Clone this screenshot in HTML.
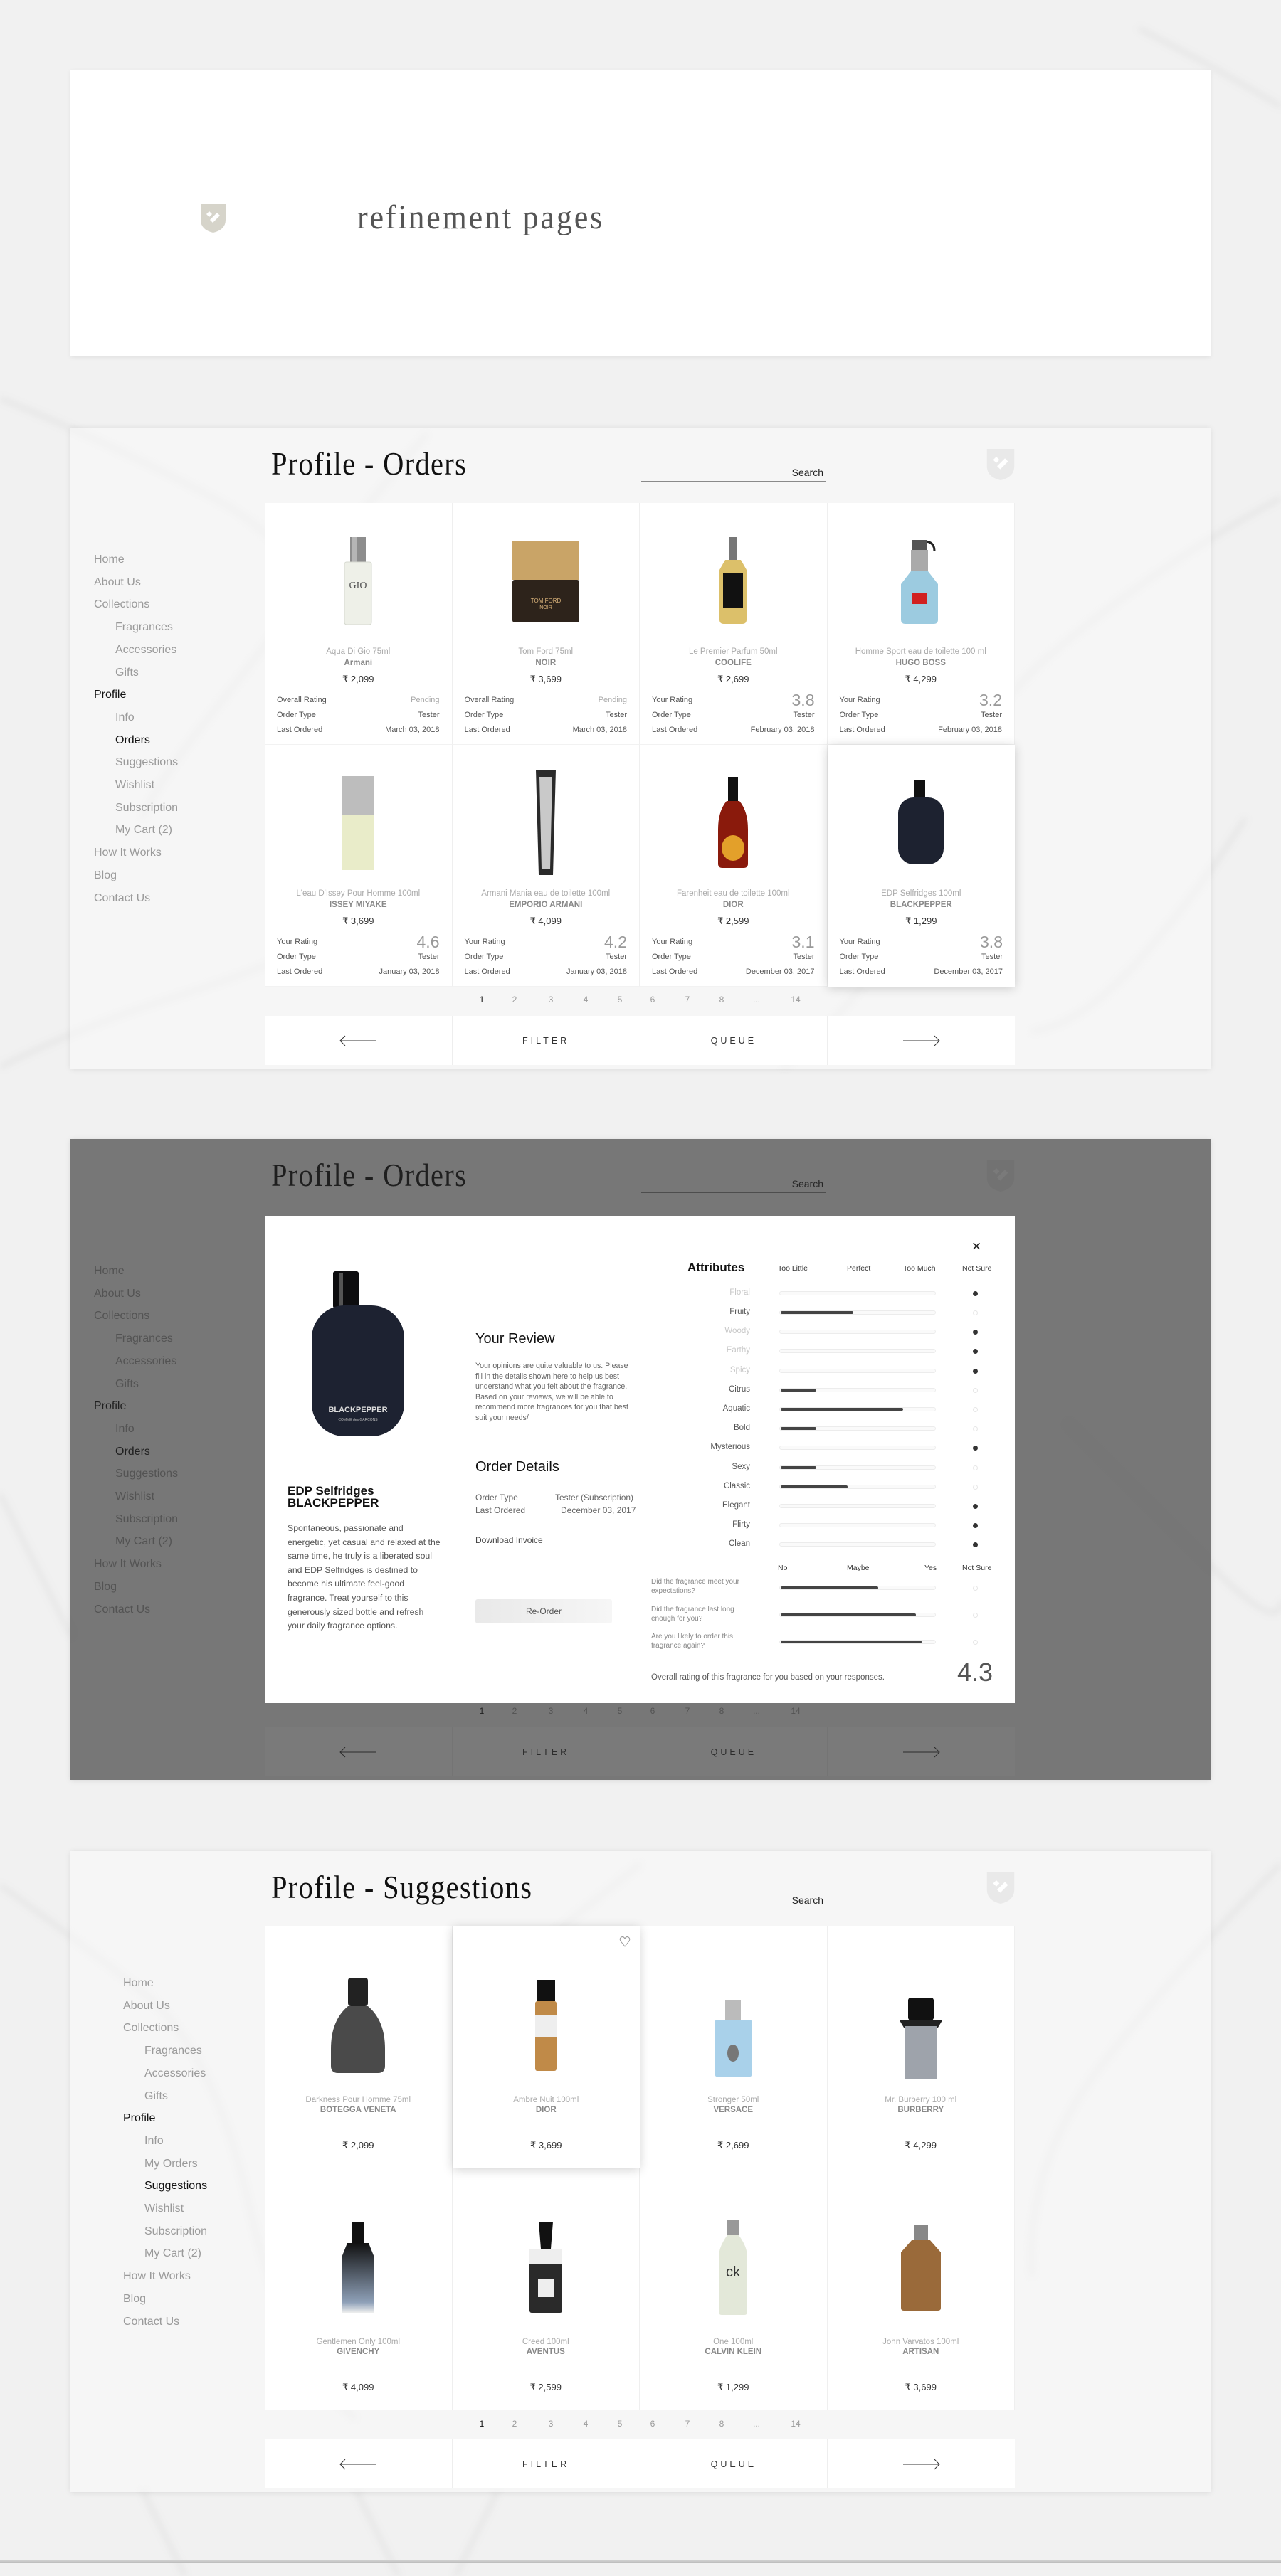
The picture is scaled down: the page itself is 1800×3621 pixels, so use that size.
<!DOCTYPE html>
<html><head><meta charset="utf-8">
<style>
*{margin:0;padding:0;box-sizing:border-box}
html,body{width:1800px;height:3621px;overflow:hidden}
body{position:relative;background:#f1f1f1;font-family:"Liberation Sans",Arial,sans-serif;color:#333}
.bg{position:absolute;left:0;top:0}
.panel{position:absolute;left:99px;width:1602px;overflow:hidden}
.p1{top:99px;height:402px;background:#fff;box-shadow:0 1px 6px rgba(0,0,0,.08)}
.pm{height:901px;background:rgba(250,250,250,.55);box-shadow:0 1px 8px rgba(0,0,0,.1)}
.p2{top:601px}.p3{top:1601px}.p4{top:2602px}
.ttl{position:absolute;left:282px;top:28px;font:46px/1 "Liberation Serif",serif;letter-spacing:1.5px;transform:scaleX(.88);transform-origin:left top;color:#111;white-space:nowrap}
.srch{position:absolute;left:802px;top:55px;width:259px;height:21px;border-bottom:1px solid #8a8a8a;text-align:right;font-size:14px;color:#222;padding-right:3px}
.shd{position:absolute;left:1287px;top:30px}
.side{position:absolute;left:33px;top:170px;list-style:none;font-size:16px;line-height:31.7px;color:#9a9a9a}
.side li.s{padding-left:30px}
.side li.d{color:#111}
.grid{position:absolute;left:273px;top:106px;width:1054px}
.c{position:relative;float:left;width:263.5px;height:340px;background:#fff;border-right:1px solid #efefef;border-bottom:1px solid #f2f2f2}
.c.hi{box-shadow:0 2px 14px rgba(0,0,0,.18);z-index:2;border:none}
.im{position:absolute;left:0;right:0;top:40px;height:140px;display:flex;justify-content:center;align-items:center}
.nm{position:absolute;top:203px;width:100%;text-align:center;font-size:11.5px;color:#aaa;white-space:nowrap}
.br{position:absolute;top:219px;width:100%;text-align:center;font-size:11.5px;color:#888;font-weight:bold}
.pr{position:absolute;top:240px;width:100%;text-align:center;font-size:13px;color:#333}
.rw{position:absolute;left:17px;right:17px;display:flex;justify-content:space-between;align-items:flex-end;font-size:11px;color:#555;height:14px;line-height:14px}
.r1{top:270px}.r2{top:291px}.r3{top:312px}
.pend{color:#aaa}
.big{font-size:23px;line-height:14px;color:#999}
.sg .im{top:62px;height:155px}
.sg .nm{top:238px}.sg .br{top:252px}.sg .pr{top:300px}
.pg{position:absolute;top:797px;left:0;width:1602px;height:20px;font-size:12px;color:#999}
.pg span{position:absolute;transform:translateX(-50%)}
.pg span.a{color:#111}
.bar{position:absolute;left:273px;top:827px;width:1054px;height:69px;background:#fff;display:flex}
.bar div{flex:1;border-right:1px solid #eee;display:flex;align-items:center;justify-content:center;font-size:12.5px;letter-spacing:4px;color:#333}
.bar div:last-child{border:none}
.ov{position:absolute;left:0;top:0;width:1602px;height:901px;background:rgba(40,40,40,.62)}
.modal{position:absolute;left:273px;top:108px;width:1054px;height:685px;background:#fff;font-family:"Liberation Sans",Arial,sans-serif}
.modal .a{position:absolute;white-space:nowrap}
.lab{position:absolute;right:372px;width:150px;text-align:right;font-size:11.5px;color:#555}
.lab.off{color:#c8c8c8}
.trk{position:absolute;left:723px;width:220px;height:6px;border:1px solid #ececec;border-radius:3px;background:#fafafa}
.trk i{position:absolute;left:1px;top:0;height:4px;background:#444;border-radius:2px}
.dot{position:absolute;left:995px;width:7px;height:7px;border-radius:50%;background:#333}
.dot.o{background:#fff;border:1px solid #e6e6e6}
</style></head><body>
<svg class="bg" width="1800" height="3621" viewBox="0 0 1800 3621">
<defs><filter id="bl"><feGaussianBlur stdDeviation="5"/></filter></defs>
<g fill="none" stroke="#bdbdbd" stroke-width="5" opacity=".3" filter="url(#bl)">
<path d="M0 560 Q150 620 300 700 T520 980 T700 1200"/>
<path d="M1800 700 Q1650 780 1500 900 T1300 1200 T1100 1500"/>
<path d="M600 610 Q520 700 450 800 T300 1000 T200 1150"/>
<path d="M0 1500 Q120 1440 250 1400 T500 1300"/>
<path d="M1750 1150 Q1680 1260 1600 1350 T1450 1450"/>
<path d="M0 2650 Q100 2720 200 2800 T350 3100 T500 3400"/>
<path d="M1800 2620 Q1660 2760 1550 2900 T1450 3200"/>
<path d="M900 2620 Q850 2660 800 2700 T650 2850"/>
<path d="M200 3500 L260 3621"/><path d="M500 3500 L560 3621"/><path d="M700 3500 L640 3621"/>
<path d="M1600 40 Q1700 90 1800 150"/>
<path d="M1500 2000 Q1600 2100 1700 2200 T1800 2250"/><path d="M0 2100 Q50 2200 100 2300"/>
</g>
</svg>

<!-- Panel 1 -->
<div class="panel p1">
<svg style="position:absolute;left:183px;top:188px" width="35" height="40" viewBox="0 0 35 40"><path d="M0 0H35V22Q35 36 17.5 40Q0 36 0 22Z" fill="#d6d4ca"/><path d="M8 14l4-4 4 4-4 4zM13 22l10-10 4 4-10 10z" fill="#fff"/></svg>
<div style="position:absolute;left:403px;top:178px;font:48px/1.2 'Liberation Serif',serif;letter-spacing:3px;color:#555;transform:scaleX(.92);transform-origin:left">refinement pages</div>
</div>

<!-- Panel 2 -->
<div class="panel pm p2">
<div class="ttl">Profile - Orders</div>
<div class="srch">Search</div>
<svg class="shd" width="40" height="44" viewBox="0 0 35 40"><path d="M0 0H35V22Q35 36 17.5 40Q0 36 0 22Z" fill="#e9e9e9"/><path d="M8 14l4-4 4 4-4 4zM13 22l10-10 4 4-10 10z" fill="#fff"/></svg>
<ul class="side"><li>Home</li><li>About Us</li><li>Collections</li><li class="s">Fragrances</li><li class="s">Accessories</li><li class="s">Gifts</li><li class="d">Profile</li><li class="s">Info</li><li class="s d">Orders</li><li class="s">Suggestions</li><li class="s">Wishlist</li><li class="s">Subscription</li><li class="s">My Cart (2)</li><li>How It Works</li><li>Blog</li><li>Contact Us</li></ul>
<div class="grid">
<div class="c"><div class="im"><svg width="70" height="125" viewBox="0 0 70 125"><rect x="24" y="0" width="22" height="35" fill="#8d8d8d"/><rect x="27" y="0" width="6" height="35" fill="#b5b5b5"/><rect x="16" y="35" width="38" height="88" rx="3" fill="#eef0e8" stroke="#d5d8cf"/><text x="35" y="72" font-size="14" text-anchor="middle" fill="#555" font-family="Liberation Serif">GIO</text></svg></div><div class="nm">Aqua Di Gio 75ml</div><div class="br">Armani</div><div class="pr">₹ 2,099</div><div class="rw r1"><span>Overall Rating</span><span class="pend">Pending</span></div><div class="rw r2"><span>Order Type</span><span>Tester</span></div><div class="rw r3"><span>Last Ordered</span><span>March 03, 2018</span></div></div>
<div class="c"><div class="im"><svg width="100" height="125" viewBox="0 0 100 125"><rect x="3" y="5" width="94" height="55" fill="#c9a467"/><rect x="3" y="60" width="94" height="60" rx="3" fill="#2d231b"/><text x="50" y="92" font-size="8" text-anchor="middle" fill="#d9b27a">TOM FORD</text><text x="50" y="101" font-size="7" text-anchor="middle" fill="#d9b27a">NOIR</text></svg></div><div class="nm">Tom Ford 75ml</div><div class="br">NOIR</div><div class="pr">₹ 3,699</div><div class="rw r1"><span>Overall Rating</span><span class="pend">Pending</span></div><div class="rw r2"><span>Order Type</span><span>Tester</span></div><div class="rw r3"><span>Last Ordered</span><span>March 03, 2018</span></div></div>
<div class="c"><div class="im"><svg width="50" height="125" viewBox="0 0 50 125"><rect x="19" y="0" width="11" height="32" fill="#777"/><path d="M14 32h22l8 14v70q0 6-6 6H12q-6 0-6-6V46z" fill="#dcc06a"/><rect x="11" y="50" width="28" height="50" fill="#111"/></svg></div><div class="nm">Le Premier Parfum 50ml</div><div class="br">COOLIFE</div><div class="pr">₹ 2,699</div><div class="rw r1"><span>Your Rating</span><span class="big">3.8</span></div><div class="rw r2"><span>Order Type</span><span>Tester</span></div><div class="rw r3"><span>Last Ordered</span><span>February 03, 2018</span></div></div>
<div class="c"><div class="im"><svg width="70" height="125" viewBox="0 0 70 125"><path d="M40 6q14 0 14 14" stroke="#222" stroke-width="3" fill="none"/><rect x="23" y="4" width="20" height="14" fill="#555"/><rect x="21" y="18" width="24" height="30" fill="#aaa"/><path d="M21 48h24l14 18v50q0 6-6 6H13q-6 0-6-6V66z" fill="#9ccbe0"/><rect x="22" y="78" width="22" height="16" fill="#d12020"/></svg></div><div class="nm">Homme Sport eau de toilette 100 ml</div><div class="br">HUGO BOSS</div><div class="pr">₹ 4,299</div><div class="rw r1"><span>Your Rating</span><span class="big">3.2</span></div><div class="rw r2"><span>Order Type</span><span>Tester</span></div><div class="rw r3"><span>Last Ordered</span><span>February 03, 2018</span></div></div>
<div class="c"><div class="im"><svg width="50" height="140" viewBox="0 0 50 140"><rect x="3" y="4" width="44" height="54" fill="#bdbdbd"/><rect x="3" y="58" width="44" height="78" fill="#e9ecc9"/></svg></div><div class="nm">L'eau D'Issey Pour Homme 100ml</div><div class="br">ISSEY MIYAKE</div><div class="pr">₹ 3,699</div><div class="rw r1"><span>Your Rating</span><span class="big">4.6</span></div><div class="rw r2"><span>Order Type</span><span>Tester</span></div><div class="rw r3"><span>Last Ordered</span><span>January 03, 2018</span></div></div>
<div class="c"><div class="im"><svg width="40" height="150" viewBox="0 0 40 150"><path d="M6 0h28l-4 148H10z" fill="#2a2a2a"/><path d="M11 10h18l-3 130H14z" fill="#c9c9c9"/></svg></div><div class="nm">Armani Mania eau de toilette 100ml</div><div class="br">EMPORIO ARMANI</div><div class="pr">₹ 4,099</div><div class="rw r1"><span>Your Rating</span><span class="big">4.2</span></div><div class="rw r2"><span>Order Type</span><span>Tester</span></div><div class="rw r3"><span>Last Ordered</span><span>January 03, 2018</span></div></div>
<div class="c"><div class="im"><svg width="50" height="130" viewBox="0 0 50 130"><rect x="18" y="0" width="14" height="34" fill="#111"/><path d="M16 34h18q12 14 12 40v48q0 6-6 6H10q-6 0-6-6V74q0-26 12-40z" fill="#8a1a0c"/><ellipse cx="25" cy="100" rx="16" ry="18" fill="#e3a02a"/></svg></div><div class="nm">Farenheit eau de toilette 100ml</div><div class="br">DIOR</div><div class="pr">₹ 2,599</div><div class="rw r1"><span>Your Rating</span><span class="big">3.1</span></div><div class="rw r2"><span>Order Type</span><span>Tester</span></div><div class="rw r3"><span>Last Ordered</span><span>December 03, 2017</span></div></div>
<div class="c hi"><div class="im"><svg width="70" height="120" viewBox="0 0 70 120"><rect x="25" y="0" width="16" height="26" fill="#111"/><rect x="3" y="24" width="64" height="94" rx="22" fill="#1d2230"/></svg></div><div class="nm">EDP Selfridges 100ml</div><div class="br">BLACKPEPPER</div><div class="pr">₹ 1,299</div><div class="rw r1"><span>Your Rating</span><span class="big">3.8</span></div><div class="rw r2"><span>Order Type</span><span>Tester</span></div><div class="rw r3"><span>Last Ordered</span><span>December 03, 2017</span></div></div>
</div>
<div class="pg"><span class="a" style="left:578px">1</span><span style="left:624px">2</span><span style="left:675px">3</span><span style="left:724px">4</span><span style="left:772px">5</span><span style="left:818px">6</span><span style="left:867px">7</span><span style="left:915px">8</span><span style="left:964px">...</span><span style="left:1019px">14</span></div>
<div class="bar"><div><svg width="52" height="16" viewBox="0 0 52 16"><path d="M1 8H52M8 1L1 8l7 7" stroke="#333" fill="none"/></svg></div><div>FILTER</div><div>QUEUE</div><div><svg width="52" height="16" viewBox="0 0 52 16"><path d="M0 8H51M44 1l7 7-7 7" stroke="#333" fill="none"/></svg></div></div>
</div>

<!-- Panel 3 -->
<div class="panel pm p3">
<div class="ttl">Profile - Orders</div>
<div class="srch">Search</div>
<svg class="shd" width="40" height="44" viewBox="0 0 35 40"><path d="M0 0H35V22Q35 36 17.5 40Q0 36 0 22Z" fill="#e9e9e9"/><path d="M8 14l4-4 4 4-4 4zM13 22l10-10 4 4-10 10z" fill="#fff"/></svg>
<ul class="side"><li>Home</li><li>About Us</li><li>Collections</li><li class="s">Fragrances</li><li class="s">Accessories</li><li class="s">Gifts</li><li class="d">Profile</li><li class="s">Info</li><li class="s d">Orders</li><li class="s">Suggestions</li><li class="s">Wishlist</li><li class="s">Subscription</li><li class="s">My Cart (2)</li><li>How It Works</li><li>Blog</li><li>Contact Us</li></ul>
<div class="pg"><span class="a" style="left:578px">1</span><span style="left:624px">2</span><span style="left:675px">3</span><span style="left:724px">4</span><span style="left:772px">5</span><span style="left:818px">6</span><span style="left:867px">7</span><span style="left:915px">8</span><span style="left:964px">...</span><span style="left:1019px">14</span></div>
<div class="bar"><div><svg width="52" height="16" viewBox="0 0 52 16"><path d="M1 8H52M8 1L1 8l7 7" stroke="#333" fill="none"/></svg></div><div>FILTER</div><div>QUEUE</div><div><svg width="52" height="16" viewBox="0 0 52 16"><path d="M0 8H51M44 1l7 7-7 7" stroke="#333" fill="none"/></svg></div></div>
<div class="ov"></div>
<div class="modal">
<svg style="position:absolute;left:64px;top:76px" width="134" height="236" viewBox="0 0 134 236"><rect x="32" y="2" width="36" height="52" rx="3" fill="#0d0d0f"/><rect x="40" y="4" width="6" height="48" fill="#555"/><rect x="2" y="50" width="130" height="184" rx="46" fill="#1d2231"/><text x="67" y="200" font-size="11" font-weight="bold" text-anchor="middle" fill="#ddd" font-family="Liberation Sans">BLACKPEPPER</text><text x="67" y="212" font-size="5" text-anchor="middle" fill="#bbb" font-family="Liberation Sans">COMME des GARÇONS</text></svg>
<div class="a" style="left:32px;top:378px;font-size:17px;line-height:17px;font-weight:bold;color:#111">EDP Selfridges<br>BLACKPEPPER</div>
<div class="a" style="left:32px;top:430px;width:215px;white-space:normal;font-size:12.3px;line-height:19.6px;color:#555">Spontaneous, passionate and energetic, yet casual and relaxed at the same time, he truly is a liberated soul and EDP Selfridges is destined to become his ultimate feel-good fragrance. Treat yourself to this generously sized bottle and refresh your daily fragrance options.</div>
<div class="a" style="left:296px;top:162px;font-size:20px;color:#111">Your Review</div>
<div class="a" style="left:296px;top:204px;width:222px;white-space:normal;font-size:10.6px;line-height:14.5px;color:#666">Your opinions are quite valuable to us. Please fill in the details shown here to help us best understand what you felt about the fragrance. Based on your reviews, we will be able to recommend more fragrances for you that best suit your needs/</div>
<div class="a" style="left:296px;top:342px;font-size:20px;color:#111">Order Details</div>
<div class="a" style="left:296px;top:389px;font-size:12px;color:#666">Order Type</div><div class="a" style="left:408px;top:389px;font-size:12px;color:#666">Tester (Subscription)</div>
<div class="a" style="left:296px;top:407px;font-size:12px;color:#666">Last Ordered</div><div class="a" style="left:416px;top:407px;font-size:12px;color:#666">December 03, 2017</div>
<div class="a" style="left:296px;top:449px;font-size:12px;color:#444;text-decoration:underline">Download Invoice</div>
<div class="a" style="left:296px;top:539px;width:192px;height:34px;border-radius:3px;background:linear-gradient(90deg,#e9e9e9,#f6f6f6);font-size:12px;line-height:34px;text-align:center;color:#555">Re-Order</div>
<div class="a" style="left:1000px;top:30px;font-size:22px;color:#222;transform:translateX(-50%)">×</div>
<div class="a" style="left:594px;top:63px;font-size:17px;font-weight:bold;color:#111">Attributes</div>
<div class="a" style="left:721px;top:68px;font-size:10.5px;color:#333">Too Little</div>
<div class="a" style="left:818px;top:68px;font-size:10.5px;color:#333">Perfect</div>
<div class="a" style="left:897px;top:68px;font-size:10.5px;color:#333">Too Much</div>
<div class="a" style="left:980px;top:68px;font-size:10.5px;color:#333">Not Sure</div>
<div class="lab off" style="top:102px">Floral</div><div class="trk" style="top:106px"></div><div class="dot" style="top:106px"></div>
<div class="lab" style="top:129px">Fruity</div><div class="trk" style="top:133px"><i style="width:47%"></i></div><div class="dot o" style="top:133px"></div>
<div class="lab off" style="top:156px">Woody</div><div class="trk" style="top:160px"></div><div class="dot" style="top:160px"></div>
<div class="lab off" style="top:183px">Earthy</div><div class="trk" style="top:187px"></div><div class="dot" style="top:187px"></div>
<div class="lab off" style="top:211px">Spicy</div><div class="trk" style="top:215px"></div><div class="dot" style="top:215px"></div>
<div class="lab" style="top:238px">Citrus</div><div class="trk" style="top:242px"><i style="width:23%"></i></div><div class="dot o" style="top:242px"></div>
<div class="lab" style="top:265px">Aquatic</div><div class="trk" style="top:269px"><i style="width:79%"></i></div><div class="dot o" style="top:269px"></div>
<div class="lab" style="top:292px">Bold</div><div class="trk" style="top:296px"><i style="width:23%"></i></div><div class="dot o" style="top:296px"></div>
<div class="lab" style="top:319px">Mysterious</div><div class="trk" style="top:323px"></div><div class="dot" style="top:323px"></div>
<div class="lab" style="top:347px">Sexy</div><div class="trk" style="top:351px"><i style="width:23%"></i></div><div class="dot o" style="top:351px"></div>
<div class="lab" style="top:374px">Classic</div><div class="trk" style="top:378px"><i style="width:43%"></i></div><div class="dot o" style="top:378px"></div>
<div class="lab" style="top:401px">Elegant</div><div class="trk" style="top:405px"></div><div class="dot" style="top:405px"></div>
<div class="lab" style="top:428px">Flirty</div><div class="trk" style="top:432px"></div><div class="dot" style="top:432px"></div>
<div class="lab" style="top:455px">Clean</div><div class="trk" style="top:459px"></div><div class="dot" style="top:459px"></div>
<div class="a" style="left:721px;top:489px;font-size:10.5px;color:#333">No</div>
<div class="a" style="left:818px;top:489px;font-size:10.5px;color:#333">Maybe</div>
<div class="a" style="left:927px;top:489px;font-size:10.5px;color:#333">Yes</div>
<div class="a" style="left:980px;top:489px;font-size:10.5px;color:#333">Not Sure</div>
<div class="a" style="left:543px;top:508px;font-size:10px;line-height:13px;color:#888">Did the fragrance meet your<br>expectations?</div>
<div class="trk" style="top:520px"><i style="width:63%"></i></div><div class="dot o" style="top:520px"></div>
<div class="a" style="left:543px;top:547px;font-size:10px;line-height:13px;color:#888">Did the fragrance last long<br>enough for you?</div>
<div class="trk" style="top:558px"><i style="width:87%"></i></div><div class="dot o" style="top:558px"></div>
<div class="a" style="left:543px;top:585px;font-size:10px;line-height:13px;color:#888">Are you likely to order this<br>fragrance again?</div>
<div class="trk" style="top:596px"><i style="width:91%"></i></div><div class="dot o" style="top:596px"></div>
<div class="a" style="left:543px;top:643px;font-size:11.5px;color:#555">Overall rating of this fragrance for you based on your responses.</div>
<div class="a" style="right:31px;top:621px;font-size:36px;color:#555">4.3</div>
</div>
</div>

<!-- Panel 4 -->
<div class="panel pm p4">
<div class="ttl">Profile - Suggestions</div>
<div class="srch" style="top:61px">Search</div>
<svg class="shd" width="40" height="44" viewBox="0 0 35 40"><path d="M0 0H35V22Q35 36 17.5 40Q0 36 0 22Z" fill="#e9e9e9"/><path d="M8 14l4-4 4 4-4 4zM13 22l10-10 4 4-10 10z" fill="#fff"/></svg>
<ul class="side" style="left:74px"><li>Home</li><li>About Us</li><li>Collections</li><li class="s">Fragrances</li><li class="s">Accessories</li><li class="s">Gifts</li><li class="d">Profile</li><li class="s">Info</li><li class="s">My Orders</li><li class="s d">Suggestions</li><li class="s">Wishlist</li><li class="s">Subscription</li><li class="s">My Cart (2)</li><li>How It Works</li><li>Blog</li><li>Contact Us</li></ul>
<div class="grid">
<div class="c sg"><div class="im"><svg width="80" height="135" viewBox="0 0 80 135"><rect x="26" y="0" width="28" height="40" rx="4" fill="#222"/><path d="M26 40h28q24 20 24 60v24q0 10-10 10H12q-10 0-10-10V100q0-40 24-60z" fill="#4a4a4a"/></svg></div><div class="nm">Darkness Pour Homme 75ml</div><div class="br">BOTEGGA VENETA</div><div class="pr">₹ 2,099</div></div>
<div class="c sg hi"><svg style="position:absolute;left:234px;top:13px" width="16" height="16" viewBox="0 0 16 16"><path d="M8 15L2 7.5Q0 4 3 2Q6 0.5 8 4Q10 0.5 13 2Q16 4 14 7.5z" fill="none" stroke="#999"/></svg><div class="im"><svg width="40" height="130" viewBox="0 0 40 130"><rect x="7" y="0" width="26" height="30" fill="#111"/><rect x="5" y="30" width="30" height="98" rx="3" fill="#c08a48"/><rect x="5" y="50" width="30" height="30" fill="#eee"/></svg></div><div class="nm">Ambre Nuit 100ml</div><div class="br">DIOR</div><div class="pr">₹ 3,699</div></div>
<div class="c sg"><div class="im" style="top:80px"><svg width="55" height="110" viewBox="0 0 55 110"><rect x="16" y="0" width="22" height="28" fill="#bbb"/><rect x="2" y="28" width="51" height="80" rx="2" fill="#a9d1ea"/><ellipse cx="27" cy="75" rx="8" ry="12" fill="#777"/></svg></div><div class="nm">Stronger 50ml</div><div class="br">VERSACE</div><div class="pr">₹ 2,699</div></div>
<div class="c sg"><div class="im" style="top:80px"><svg width="60" height="115" viewBox="0 0 60 115"><rect x="12" y="0" width="36" height="32" rx="4" fill="#111"/><path d="M0 32h60l-6 10H6z" fill="#222"/><rect x="8" y="40" width="44" height="74" fill="#9ea3ab"/></svg></div><div class="nm">Mr. Burberry 100 ml</div><div class="br">BURBERRY</div><div class="pr">₹ 4,299</div></div>
<div class="c sg"><div class="im"><svg width="50" height="130" viewBox="0 0 50 130"><rect x="16" y="0" width="18" height="30" fill="#111"/><defs><linearGradient id="gv" x1="0" y1="0" x2="0" y2="1"><stop offset="0" stop-color="#111"/><stop offset=".85" stop-color="#8ea0b8"/><stop offset="1" stop-color="#eee"/></linearGradient></defs><path d="M10 30h30l8 20v78H2V50z" fill="url(#gv)"/></svg></div><div class="nm">Gentlemen Only 100ml</div><div class="br">GIVENCHY</div><div class="pr">₹ 4,099</div></div>
<div class="c sg"><div class="im"><svg width="50" height="130" viewBox="0 0 50 130"><path d="M15 0h20l-3 38H18z" fill="#111"/><rect x="2" y="38" width="46" height="90" rx="3" fill="#2a2a2a"/><rect x="2" y="38" width="46" height="22" fill="#eee"/><rect x="14" y="80" width="22" height="26" fill="#eee"/></svg></div><div class="nm">Creed 100ml</div><div class="br">AVENTUS</div><div class="pr">₹ 2,599</div></div>
<div class="c sg"><div class="im"><svg width="44" height="135" viewBox="0 0 44 135"><rect x="14" y="0" width="16" height="22" fill="#999"/><path d="M14 22h16q12 16 12 30v78q0 4-4 4H6q-4 0-4-4V52q0-14 12-30z" fill="#e3e8d9"/><text x="22" y="80" font-size="20" text-anchor="middle" fill="#333" font-family="Liberation Sans">ck</text></svg></div><div class="nm">One 100ml</div><div class="br">CALVIN KLEIN</div><div class="pr">₹ 1,299</div></div>
<div class="c sg"><div class="im"><svg width="60" height="120" viewBox="0 0 60 120"><rect x="20" y="0" width="20" height="20" fill="#888"/><path d="M18 20h24l16 18v78q0 4-4 4H6q-4 0-4-4V38z" fill="#9a6a3a"/></svg></div><div class="nm">John Varvatos 100ml</div><div class="br">ARTISAN</div><div class="pr">₹ 3,699</div></div>
</div>
<div class="pg" style="top:798px"><span class="a" style="left:578px">1</span><span style="left:624px">2</span><span style="left:675px">3</span><span style="left:724px">4</span><span style="left:772px">5</span><span style="left:818px">6</span><span style="left:867px">7</span><span style="left:915px">8</span><span style="left:964px">...</span><span style="left:1019px">14</span></div>
<div class="bar"><div><svg width="52" height="16" viewBox="0 0 52 16"><path d="M1 8H52M8 1L1 8l7 7" stroke="#333" fill="none"/></svg></div><div>FILTER</div><div>QUEUE</div><div><svg width="52" height="16" viewBox="0 0 52 16"><path d="M0 8H51M44 1l7 7-7 7" stroke="#333" fill="none"/></svg></div></div>
</div>
<div style="position:absolute;left:0;top:3598px;width:1800px;height:5px;background:linear-gradient(#d6d6d6,#bdbdbd)"></div>
</body></html>
